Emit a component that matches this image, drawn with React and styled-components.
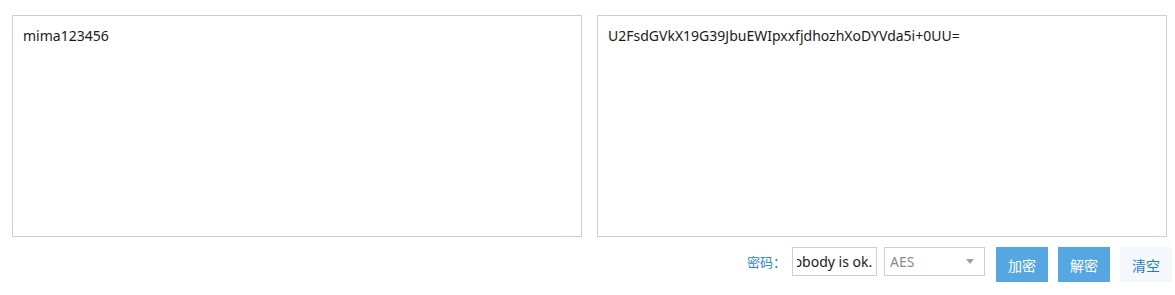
import React, { useEffect, useRef } from "react"
import styled, { createGlobalStyle } from "styled-components"

const GlobalStyle = createGlobalStyle`
  html, body {
    margin: 0;
    padding: 0;
    background: #fff;
  }
  body {
    font-family: "Noto Sans", "Noto Sans CJK SC", sans-serif;
  }
`

const Page = styled.div`
  width: 1175px;
  padding: 15px 3px 0 12px;
  box-sizing: border-box;
`

const Editors = styled.div`
  display: flex;
  gap: 15px;
  width: 1155px;
`

const TextBox = styled.textarea`
  flex: 1;
  height: 222px;
  box-sizing: border-box;
  border: 1px solid #c6d0dc;
  padding: 10px;
  margin: 0;
  resize: none;
  outline: none;
  font-family: "Noto Sans", "Noto Sans CJK SC", sans-serif;
  font-size: 14px;
  line-height: 20px;
  color: #1a1a1a;
`

const Toolbar = styled.div`
  display: flex;
  justify-content: flex-end;
  align-items: flex-start;
  margin-top: 10px;
`

const Label = styled.span`
  color: #2b86cf;
  font-size: 13px;
  line-height: 29px;
  margin-right: 6px;
  font-family: "Noto Sans CJK SC", sans-serif;
`

const PwdInput = styled.input`
  width: 85px;
  height: 29px;
  box-sizing: border-box;
  border: 1px solid #c6d0dc;
  padding: 0 4px;
  margin: 0 7px 0 0;
  outline: none;
  font-family: "Noto Sans", "Noto Sans CJK SC", sans-serif;
  font-size: 14px;
  color: #1a1a1a;
`

const Select = styled.div`
  width: 101px;
  height: 29px;
  box-sizing: border-box;
  border: 1px solid #c6d0dc;
  display: flex;
  align-items: center;
  justify-content: space-between;
  padding: 0 10px 0 5px;
  margin-right: 11px;
  color: #8a8a8a;
  font-size: 14px;
`

const Arrow = styled.span`
  width: 0;
  height: 0;
  border-left: 4px solid transparent;
  border-right: 4px solid transparent;
  border-top: 5px solid #a0a0a0;
`

const Button = styled.button`
  width: 52px;
  height: 35px;
  border: none;
  margin: 0 0 0 ${p => (p.$first ? 0 : 10)}px;
  padding: 0;
  background: ${p => (p.$light ? "#f4f8fc" : "#56a7e1")};
  color: ${p => (p.$light ? "#1f7ccc" : "#fff")};
  font-family: "Noto Sans CJK SC", sans-serif;
  font-size: 14px;
  cursor: pointer;
`

export default function App() {
  const pwdRef = useRef(null)

  useEffect(() => {
    if (pwdRef.current) pwdRef.current.scrollLeft = pwdRef.current.scrollWidth
  }, [])

  return (
    <>
      <GlobalStyle />
      <Page>
        <Editors>
          <TextBox defaultValue="mima123456" />
          <TextBox defaultValue="U2FsdGVkX19G39JbuEWIpxxfjdhozhXoDYVda5i+0UU=" />
        </Editors>
        <Toolbar>
          <Label>密码：</Label>
          <PwdInput ref={pwdRef} defaultValue="nobody is ok." />
          <Select>
            AES
            <Arrow />
          </Select>
          <Button $first>加密</Button>
          <Button>解密</Button>
          <Button $light>清空</Button>
        </Toolbar>
      </Page>
    </>
  )
}
